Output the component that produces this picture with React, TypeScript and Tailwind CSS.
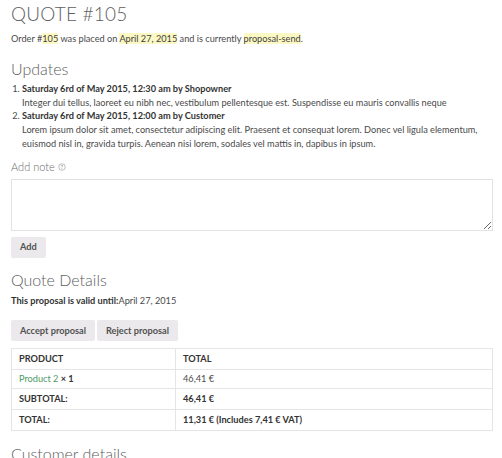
import React from "react";

const Mark = ({ children }: { children: React.ReactNode }) => (
  <mark className="bg-[#fcf8c4] text-[#3f3f3f]">{children}</mark>
);

export default function App() {
  return (
    <div
      className="w-[502px] h-[458px] overflow-hidden bg-white pl-[11px] pr-[9px] text-[#4a4a4a] text-[9.2px] leading-[13.75px]"
      style={{ fontFamily: "Lato, 'Open Sans', sans-serif" }}
    >
      <h1 className="pt-[2px] text-[19px] leading-[24px] font-light text-[#5e5e5e] tracking-[0.2px]">QUOTE #105</h1>
      <p className="mt-[6px]">
        Order #<Mark>105</Mark> was placed on <Mark>April 27, 2015</Mark> and is currently <Mark>proposal-send</Mark>.
      </p>
      <h2 className="mt-[12px] text-[16px] leading-[22px] font-light text-[#5e5e5e]">Updates</h2>
      <ol className="mt-[2px] list-decimal pl-[11px]">
        <li>
          <div className="font-bold text-[#333]">Saturday 6rd of May 2015, 12:30 am by Shopowner</div>
          <div>Integer dui tellus, laoreet eu nibh nec, vestibulum pellentesque est. Suspendisse eu mauris convallis neque</div>
        </li>
        <li>
          <div className="font-bold text-[#333]">Saturday 6rd of May 2015, 12:00 am by Customer</div>
          <div>
            Lorem ipsum dolor sit amet, consectetur adipiscing elit. Praesent et consequat lorem. Donec vel ligula elementum,
            euismod nisl in, gravida turpis. Aenean nisi lorem, sodales vel mattis in, dapibus in ipsum.
          </div>
        </li>
      </ol>
      <div className="mt-[9px] flex items-center gap-[3px] text-[11px] leading-[14px] font-light text-[#6a6a6a]">
        <span>Add note</span>
        <svg width="8" height="8" viewBox="0 0 16 16" className="mt-[1px]">
          <circle cx="8" cy="8" r="6.5" fill="none" stroke="#999" strokeWidth="1.3" />
          <text x="8" y="11.5" textAnchor="middle" fontSize="10" fontWeight="bold" fill="#999" fontFamily="Lato, sans-serif">?</text>
        </svg>
      </div>
      <textarea className="mt-[5px] block w-full h-[52px] border border-[#e2e2e2] resize-y outline-none" />
      <button className="mt-[6px] block h-[21px] px-[9px] bg-[#ebe9eb] rounded-[2px] font-bold text-[#515151] text-[9.2px]">
        Add
      </button>
      <h2 className="mt-[11px] text-[16px] leading-[22px] font-light text-[#5e5e5e]">Quote Details</h2>
      <p className="mt-[3px]">
        <span className="font-bold text-[#333]">This proposal is valid until:</span>April 27, 2015
      </p>
      <div className="mt-[13px] flex gap-[2px]">
        <button className="h-[21px] px-[9px] bg-[#ebe9eb] rounded-[2px] font-bold text-[#515151]">Accept proposal</button>
        <button className="h-[21px] px-[9px] bg-[#ebe9eb] rounded-[2px] font-bold text-[#515151]">Reject proposal</button>
      </div>
      <table className="mt-[7px] w-full border-collapse border border-[#e5e5e5] text-left">
        <tbody>
          <tr className="h-[21px]">
            <th className="w-[164px] border border-[#e5e5e5] px-[7px] font-bold text-[#333]">PRODUCT</th>
            <th className="border border-[#e5e5e5] px-[7px] font-bold text-[#333]">TOTAL</th>
          </tr>
          <tr className="h-[19px]">
            <td className="border border-[#e5e5e5] px-[7px]">
              <span className="text-[#4b9a63]">Product 2</span> <span className="font-bold text-[#333]">× 1</span>
            </td>
            <td className="border border-[#e5e5e5] px-[7px]">46,41&nbsp;€</td>
          </tr>
          <tr className="h-[21px]">
            <th className="border border-[#e5e5e5] px-[7px] font-bold text-[#333]">SUBTOTAL:</th>
            <td className="border border-[#e5e5e5] px-[7px] font-bold text-[#333]">46,41&nbsp;€</td>
          </tr>
          <tr className="h-[21px]">
            <th className="border border-[#e5e5e5] px-[7px] font-bold text-[#333]">TOTAL:</th>
            <td className="border border-[#e5e5e5] px-[7px] font-bold text-[#333]">11,31&nbsp;€ (Includes 7,41&nbsp;€ VAT)</td>
          </tr>
        </tbody>
      </table>
      <h2 className="mt-[12px] text-[16px] leading-[22px] font-light text-[#5e5e5e]">Customer details</h2>
    </div>
  );
}
